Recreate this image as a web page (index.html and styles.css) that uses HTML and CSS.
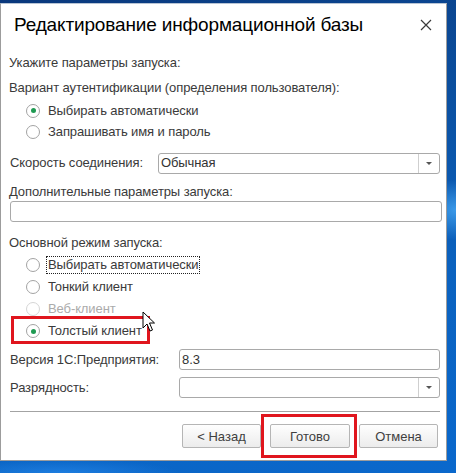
FILE: index.html
```html
<!DOCTYPE html>
<html lang="ru">
<head>
<meta charset="utf-8">
<link rel="stylesheet" href="styles.css">
</head>
<body>
<div class="desk">
  <div class="win">
    <div class="title">
      <span class="title-text">Редактирование информационной базы</span>
      <span class="close"><svg width="12" height="12" viewBox="0 0 12 12"><path d="M1 1 L11 11 M11 1 L1 11" stroke="#3a3a3a" stroke-width="1.2" fill="none"/></svg></span>
    </div>
    <div class="content">
      <div class="line l-hint">Укажите параметры запуска:</div>
      <div class="line l-auth">Вариант аутентификации (определения пользователя):</div>
      <div class="radio r-first"><span class="rb on"></span><span class="rt">Выбирать автоматически</span></div>
      <div class="radio"><span class="rb"></span><span class="rt">Запрашивать имя и пароль</span></div>

      <div class="field f-speed">
        <span class="flabel w148">Скорость соединения:</span>
        <div class="box select"><span class="val">Обычная</span><span class="drop"><span class="tri"></span></span></div>
      </div>

      <div class="line l-extra">Дополнительные параметры запуска:</div>
      <div class="box input-wide"></div>

      <div class="line l-mode">Основной режим запуска:</div>
      <div class="radio r22"><span class="rb"></span><span class="rt focus">Выбирать автоматически</span></div>
      <div class="radio r22"><span class="rb"></span><span class="rt">Тонкий клиент</span></div>
      <div class="radio r22 disabled"><span class="rb"></span><span class="rt">Веб-клиент</span></div>
      <div class="radio r22 marked"><span class="rb on"></span><span class="rt">Толстый клиент</span><span class="mark mark-radio"></span></div>

      <div class="field f-ver">
        <span class="flabel w169">Версия 1С:Предприятия:</span>
        <div class="box input"><span class="val">8.3</span></div>
      </div>
      <div class="field f-bit">
        <span class="flabel w169">Разрядность:</span>
        <div class="box select"><span class="val"></span><span class="drop"><span class="tri"></span></span></div>
      </div>

      <div class="sep"></div>

      <div class="buttons">
        <button class="btn">&lt; Назад</button>
        <button class="btn btn-marked">Готово<span class="mark mark-btn"></span></button>
        <button class="btn">Отмена</button>
      </div>
    </div>
  </div>
  <svg class="cursor" width="14" height="22" viewBox="0 0 14 22"><path d="M1 1 L1 17 L5 13 L8 20 L10.5 19 L7.5 12 L12.5 12 Z" fill="#fff" stroke="#000" stroke-width="1"/></svg>
</div>
</body>
</html>
```
FILE: styles.css
```css
* { box-sizing: border-box; }
html, body { margin: 0; padding: 0; }
body {
  width: 456px;
  height: 473px;
  overflow: hidden;
  font-family: "Liberation Sans", Arial, sans-serif;
}
.desk {
  position: relative;
  width: 456px;
  height: 473px;
  padding-top: 3px;
  background:
    radial-gradient(ellipse 40px 30px at 456px 210px, rgba(80,180,255,0.7), rgba(80,180,255,0) 100%),
    radial-gradient(ellipse 120px 14px at 60px 473px, rgba(40,140,240,0.6), rgba(40,140,240,0) 100%),
    linear-gradient(165deg, #0a387c 0%, #0b4f9f 35%, #0b62bf 65%, #0a68cc 100%);
}
.win {
  width: 447px;
  height: 458px;
  background: #fff;
  border: 1px solid #9c9c9c;
  border-top-color: #b8c4d4;
  display: flex;
  flex-direction: column;
}
.title {
  height: 48px;
  padding: 9px 0 0 13px;
  display: flex;
  align-items: flex-start;
  justify-content: space-between;
}
.title-text {
  font-size: 19px;
  line-height: 24px;
  letter-spacing: -0.15px;
  color: #000;
}
.close {
  width: 24px;
  height: 24px;
  margin-right: 8px;
  display: flex;
  align-items: center;
  justify-content: center;
}
.content {
  padding: 0 6px 0 8px;
  font-size: 13px;
  letter-spacing: -0.1px;
  color: #3a3a3a;
}
.line {
  height: 22px;
  display: flex;
  align-items: center;
  line-height: 16px;
}
.l-auth { margin-top: 3px; }
.l-extra { margin-top: 9px; height: 18px; }
.l-mode { margin-top: 10px; }

.radio {
  position: relative;
  height: 21px;
  display: flex;
  align-items: center;
  padding-left: 17px;
  line-height: 16px;
}
.r-first { margin-top: 1px; }
.r22 { height: 22px; }
.rb {
  width: 14px;
  height: 14px;
  border-radius: 50%;
  border: 1px solid #a3a3a3;
  background: #fff;
  flex: none;
  display: flex;
  align-items: center;
  justify-content: center;
}
.rb.on::after {
  content: "";
  width: 5px;
  height: 5px;
  border-radius: 50%;
  background: #1f9a52;
}
.rt { margin-left: 8px; }
.rt.focus {
  margin-left: 6px;
  padding: 0 1px;
  border: 1px dotted #222;
}
.disabled .rb { border-color: #d6d6d6; }
.disabled .rt { color: #ababab; }

.field {
  display: flex;
  align-items: center;
}
.f-speed { margin-top: 10px; height: 22px; }
.f-ver { margin-top: 7px; height: 21px; }
.f-bit { margin-top: 7px; height: 21px; }
.flabel { flex: none; line-height: 16px; padding-left: 1px; }
.w148 { width: 149px; }
.w169 { width: 170px; }

.box {
  height: 21px;
  border: 1px solid #a9a9a9;
  border-radius: 3px;
  background: #fff;
  display: flex;
  align-items: center;
}
.field .box { flex: 1; }
.val { flex: 1; padding-left: 2px; color: #333; line-height: 16px; }
.drop {
  width: 21px;
  height: 100%;
  border-left: 1px solid #cfcfcf;
  display: flex;
  align-items: center;
  justify-content: center;
}
.tri {
  width: 0;
  height: 0;
  border-left: 3px solid transparent;
  border-right: 3px solid transparent;
  border-top: 3px solid #555;
}
.input-wide { width: 432px; margin-left: 1px; }

.sep {
  margin-top: 13px;
  height: 1px;
  background: #a3a3a3;
  margin-left: 1px;
}
.buttons {
  margin-top: 12px;
  display: flex;
  justify-content: flex-end;
  gap: 9px;
  padding-right: 2px;
}
.btn {
  position: relative;
  width: 79px;
  height: 24px;
  padding: 0;
  font-family: "Liberation Sans", Arial, sans-serif;
  font-size: 13px;
  color: #404040;
  border: 1px solid #b5b5b5;
  border-radius: 2px;
  background: linear-gradient(#fefefe, #ececec);
}
.btn-marked { width: 80px; }
.mark {
  position: absolute;
  border: 3px solid #e0161e;
  pointer-events: none;
}
.mark-radio {
  left: 2px;
  top: -4px;
  width: 139px;
  height: 28px;
}
.mark-btn {
  left: -10px;
  top: -11px;
  width: 96px;
  height: 44px;
}
.cursor {
  position: absolute;
  left: 142px;
  top: 311px;
}
```
